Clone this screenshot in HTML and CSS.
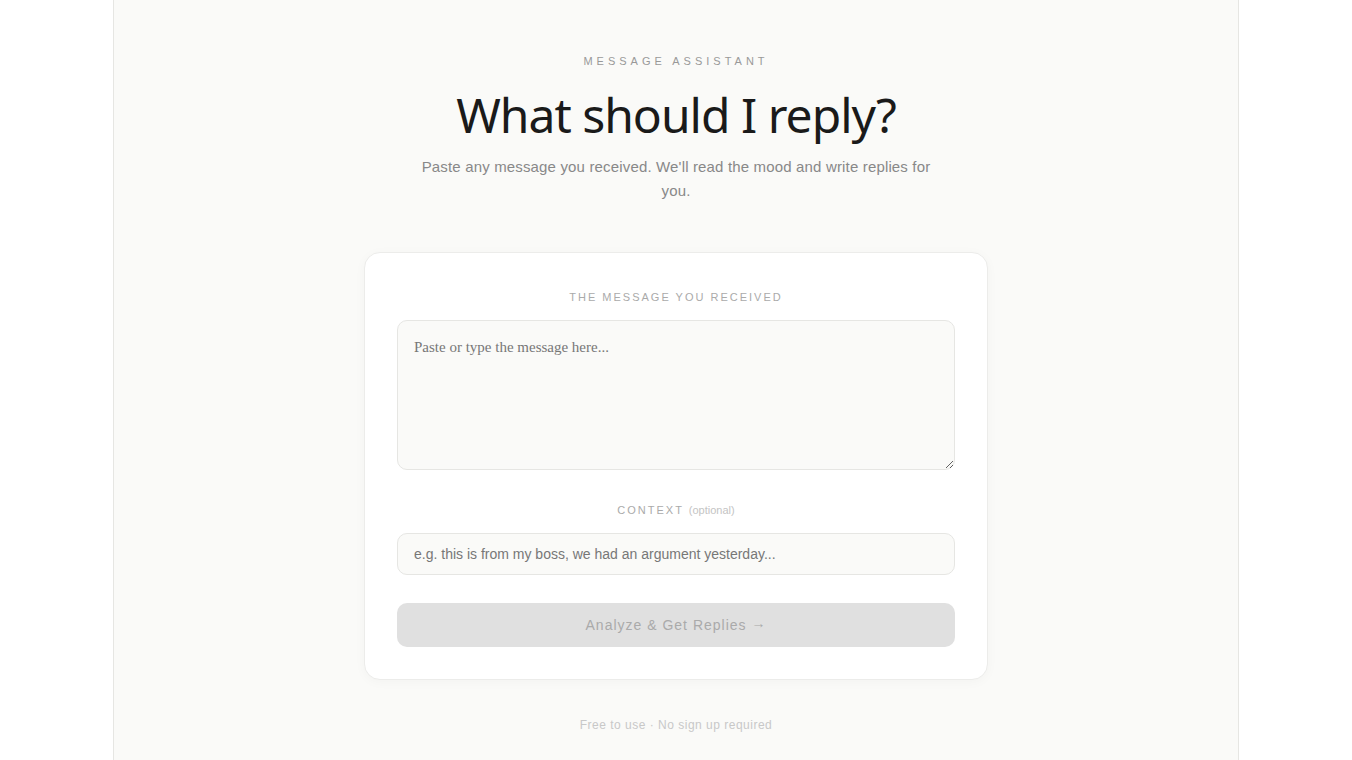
FILE: index.html
```html
<!DOCTYPE html>
<html lang="en">
<head>
    <meta charset="UTF-8">
    <meta name="viewport" content="width=device-width, initial-scale=1.0">
    <title>What should I reply?</title>
    <link rel="stylesheet" href="styles.css">
</head>
<body>
    <div class="page">
        <header class="intro">
            <div class="eyebrow">Message Assistant</div>
            <h1>What should I reply?</h1>
            <p class="lead">Paste any message you received. We'll read the mood and write replies for you.</p>
        </header>

        <div class="card">
            <label class="field-label" for="message">The message you received</label>
            <textarea id="message" class="message-box" placeholder="Paste or type the message here..."></textarea>

            <label class="field-label context-label" for="context">Context <span class="optional">(optional)</span></label>
            <input id="context" class="context-input" type="text" placeholder="e.g. this is from my boss, we had an argument yesterday...">

            <button class="analyze" disabled>Analyze &amp; Get Replies <span class="arrow">→</span></button>
        </div>

        <footer class="footnote">Free to use · No sign up required</footer>
    </div>
</body>
</html>
```

FILE: styles.css
```css
* {
    margin: 0;
    padding: 0;
    box-sizing: border-box;
}

body {
    font-family: 'Liberation Sans', Arial, sans-serif;
    background: #ffffff;
    min-height: 100vh;
}

.page {
    width: 1126px;
    margin: 0 auto;
    min-height: 100vh;
    background: #fafaf8;
    border-left: 1px solid #e6e6e3;
    border-right: 1px solid #e6e6e3;
    padding: 54px 0 28px;
    display: flex;
    flex-direction: column;
    align-items: center;
}

.intro {
    text-align: center;
    display: flex;
    flex-direction: column;
    align-items: center;
}

.eyebrow {
    font-size: 11px;
    letter-spacing: 4px;
    text-transform: uppercase;
    color: #999999;
    line-height: 14px;
}

h1 {
    font-family: 'Noto Sans', 'Open Sans', sans-serif;
    font-weight: 400;
    font-size: 48px;
    letter-spacing: -1px;
    line-height: 58px;
    color: #1a1a1a;
    margin-top: 18px;
}

.lead {
    font-size: 15px;
    letter-spacing: 0.16px;
    line-height: 24px;
    color: #888888;
    max-width: 520px;
    margin-top: 11px;
}

.card {
    width: 624px;
    margin-top: 49px;
    background: #ffffff;
    border: 1px solid #ececea;
    border-radius: 16px;
    box-shadow: 0 2px 12px rgba(0, 0, 0, 0.03);
    padding: 37px 32px 32px;
    display: flex;
    flex-direction: column;
}

.field-label {
    display: block;
    text-align: center;
    font-size: 11px;
    letter-spacing: 2px;
    text-transform: uppercase;
    color: #aaaaaa;
    line-height: 14px;
    margin-bottom: 16px;
}

.optional {
    text-transform: none;
    letter-spacing: 0;
    color: #c4c4c4;
    font-size: 11px;
}

.message-box {
    width: 100%;
    height: 150px;
    padding: 15px 16px;
    font-family: 'Liberation Serif', 'Times New Roman', serif;
    font-size: 15px;
    line-height: 22px;
    color: #333333;
    background: #fafaf8;
    border: 1px solid #e6e6e3;
    border-radius: 10px;
    outline: none;
}

.message-box::placeholder {
    color: #777777;
}

.context-label {
    margin-top: 33px;
}

.context-input {
    width: 100%;
    height: 42px;
    padding: 0 16px;
    font-family: 'Liberation Sans', Arial, sans-serif;
    font-size: 14px;
    color: #333333;
    background: #fafaf8;
    border: 1px solid #e6e6e3;
    border-radius: 10px;
    outline: none;
}

.context-input::placeholder {
    color: #777777;
}

.analyze {
    width: 100%;
    height: 44px;
    margin-top: 28px;
    border: none;
    border-radius: 10px;
    background: #e0e0e0;
    color: #aaaaaa;
    font-family: 'Liberation Sans', Arial, sans-serif;
    font-size: 14px;
    letter-spacing: 1px;
    cursor: not-allowed;
}

.arrow {
    position: relative;
    top: -2px;
}

.footnote {
    margin-top: 38px;
    font-size: 12px;
    color: #c8c8c8;
    letter-spacing: 0.5px;
}
```
